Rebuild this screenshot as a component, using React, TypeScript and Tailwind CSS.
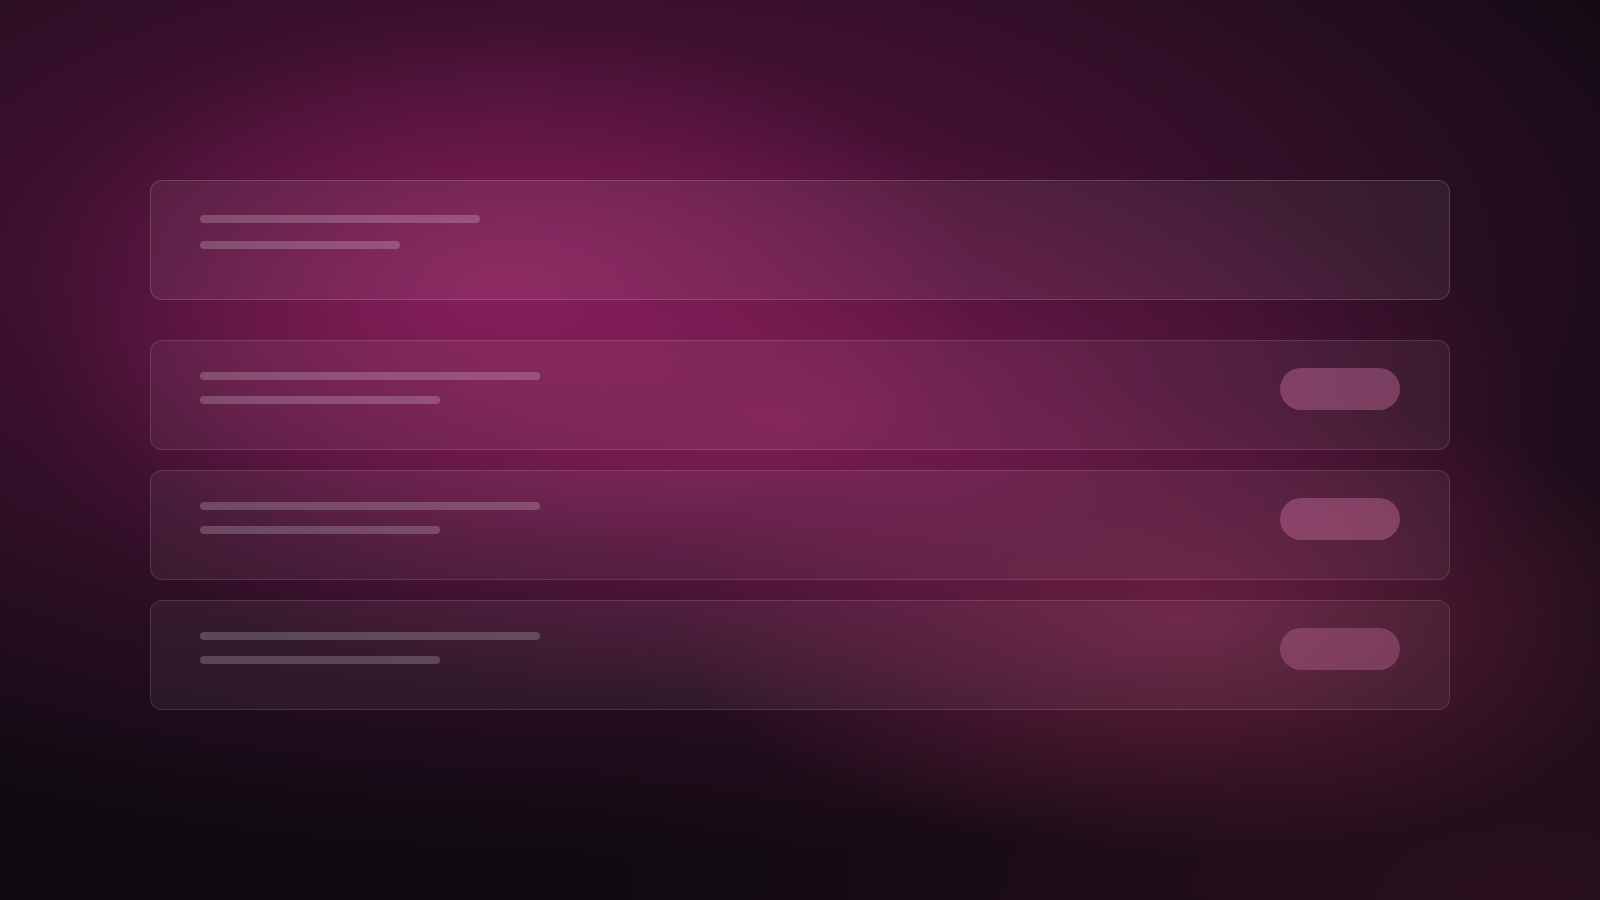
const rows = [
  { id: "row-1", pill: "bg-[#d878a8]/[0.38]" },
  { id: "row-2", pill: "bg-[#d878a8]/[0.38]" },
  { id: "row-3", pill: "bg-[#d878a8]/[0.32]" },
];

function Bar({ className }: { className: string }) {
  return <div className={`h-2 rounded-full bg-white/[0.2] ${className}`} />;
}

function HeaderCard() {
  return (
    <div className="h-[120px] rounded-xl border border-white/[0.16] bg-white/[0.06] px-[49px] pt-[34px]">
      <Bar className="w-[280px]" />
      <Bar className="mt-[18px] w-[200px]" />
    </div>
  );
}

function RowCard({ pill }: { pill: string }) {
  return (
    <div className="flex h-[110px] items-start justify-between rounded-xl border border-white/[0.12] bg-white/[0.05] px-[49px] pt-[27px]">
      <div className="pt-[4px]">
        <Bar className="w-[340px]" />
        <Bar className="mt-4 w-[240px]" />
      </div>
      <div className={`h-[42px] w-[120px] rounded-full ${pill}`} />
    </div>
  );
}

export default function App() {
  return (
    <div className="flex h-[900px] w-full flex-col overflow-hidden bg-[#0e0a10] bg-[radial-gradient(ellipse_30%_30%_at_31%_32%,rgba(150,34,100,0.7)_0%,transparent_100%),radial-gradient(ellipse_48%_32%_at_50%_47%,rgba(135,30,90,0.8)_0%,rgba(120,28,80,0.4)_50%,transparent_100%),radial-gradient(ellipse_32%_26%_at_74%_69%,rgba(135,40,78,0.65)_0%,transparent_100%),radial-gradient(ellipse_80%_66%_at_36%_30%,rgba(95,19,66,0.95)_0%,rgba(66,17,50,0.8)_50%,transparent_100%),radial-gradient(ellipse_60%_55%_at_95%_100%,rgba(60,18,40,0.6)_0%,transparent_100%)] px-[150px] pt-[180px]">
      <HeaderCard />
      <div className="mt-10 flex flex-col gap-5">
        {rows.map((r) => (
          <RowCard key={r.id} pill={r.pill} />
        ))}
      </div>
    </div>
  );
}
